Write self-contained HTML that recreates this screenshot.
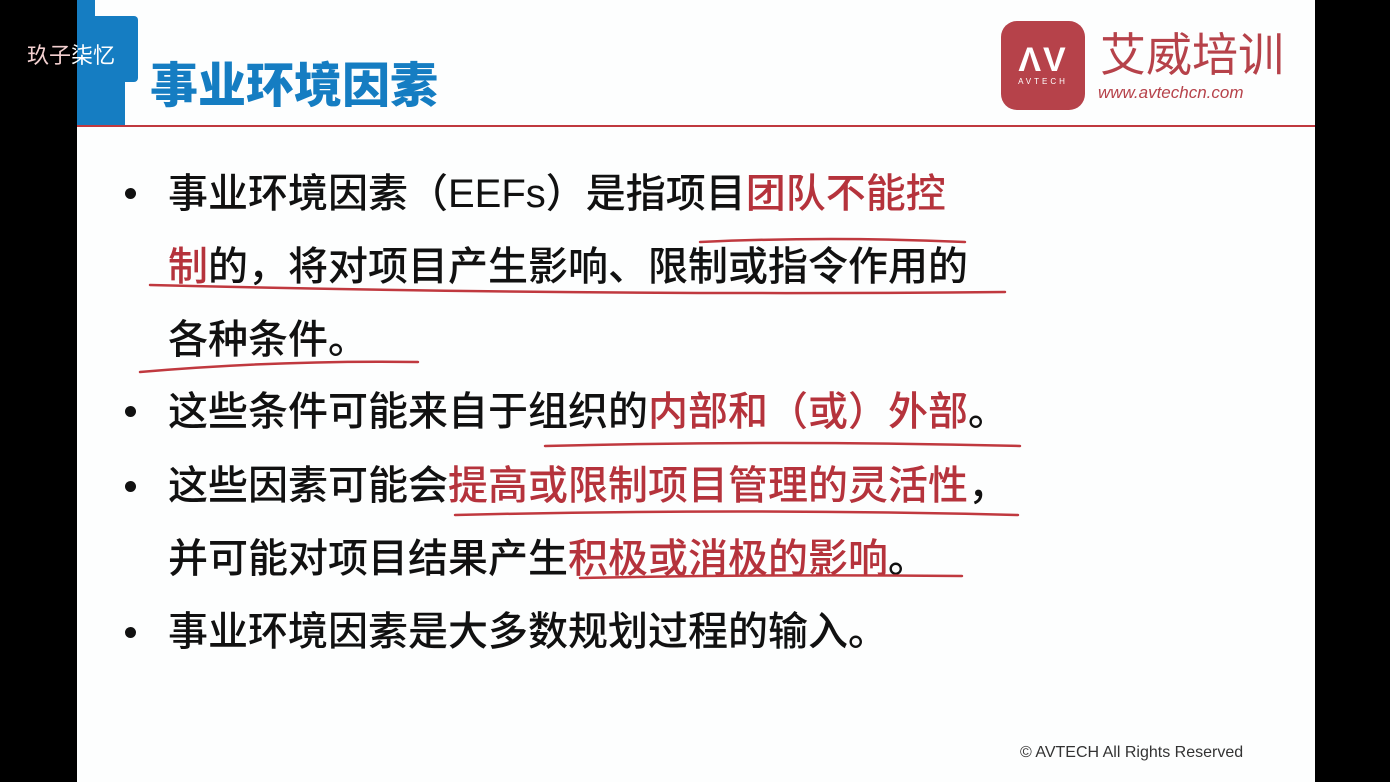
<!DOCTYPE html>
<html><head><meta charset="utf-8"><style>
body{margin:0;width:1390px;height:782px;background:#000;position:relative;overflow:hidden;font-family:"Liberation Sans","Noto Sans CJK SC",sans-serif}
.page{position:absolute;left:77px;top:0;width:1238px;height:782px;background:#fdfefe}
.b{position:absolute;background:#157dc2}
.line{position:absolute;font-size:40px;color:#111;white-space:nowrap;left:168px;line-height:48px;font-weight:500}
.dot{position:absolute;left:125px;width:11px;height:11px;border-radius:50%;background:#111}
.r{color:#b5333c}
</style></head><body>
<div class="page"></div>
<div class="b" style="left:77px;top:0;width:18px;height:16px"></div>
<div class="b" style="left:77px;top:16px;width:61px;height:66px;border-radius:0 4px 4px 0"></div>
<div class="b" style="left:77px;top:82px;width:48px;height:45px"></div>
<div style="position:absolute;left:77px;top:125px;width:1238px;height:2px;background:#c0393f"></div>
<div style="position:absolute;left:27px;top:38px;font-size:22px;color:#fff;"><span style="color:#f3d0d0">玖子</span>柒忆</div>
<div style="position:absolute;left:150px;top:57px;font-size:48px;font-weight:900;color:#157dc2;line-height:60px">事业环境因素</div>
<div style="position:absolute;left:1001px;top:21px;width:84px;height:89px;border-radius:16px;background:#b6424a;color:#fff;text-align:center">
<div style="font-size:34px;font-weight:bold;margin-top:22px;line-height:34px;letter-spacing:2px">ΛV</div>
<div style="font-size:8px;letter-spacing:3px">AVTECH</div></div>
<div style="position:absolute;left:1100px;top:30px;font-size:46px;color:#b6424a;line-height:50px">艾威培训</div>
<div style="position:absolute;left:1098px;top:83px;font-size:17px;color:#b6424a;font-style:italic">www.avtechcn.com</div>
<div class="dot" style="top:188px"></div>
<div class="line" style="top:170px">事业环境因素（EEFs）是指项目<span class="r">团队不能控</span></div>
<div class="line" style="top:243px"><span class="r">制</span>的，将对项目产生影响、限制或指令作用的</div>
<div class="line" style="top:316px">各种条件。</div>
<div class="dot" style="top:406px"></div>
<div class="line" style="top:388px">这些条件可能来自于组织的<span class="r">内部和（或）外部</span>。</div>
<div class="dot" style="top:481px"></div>
<div class="line" style="top:462px">这些因素可能会<span class="r">提高或限制项目管理的灵活性</span>，</div>
<div class="line" style="top:535px">并可能对项目结果产生<span class="r">积极或消极的影响</span>。</div>
<div class="dot" style="top:627px"></div>
<div class="line" style="top:608px">事业环境因素是大多数规划过程的输入。</div>
<svg style="position:absolute;left:0;top:0" width="1390" height="782" fill="none" stroke="#c0393f" stroke-width="2.5" stroke-linecap="round">
<path d="M700 242 Q830 236 965 242"/>
<path d="M150 285 Q600 296 1005 292"/>
<path d="M140 372 Q280 360 418 362"/>
<path d="M545 446 Q780 440 1020 446"/>
<path d="M455 515 Q740 508 1018 515"/>
<path d="M580 578 Q770 574 962 576"/>
</svg>
<div style="position:absolute;left:1020px;top:744px;font-size:16px;color:#333">© AVTECH All Rights Reserved</div>
</body></html>
